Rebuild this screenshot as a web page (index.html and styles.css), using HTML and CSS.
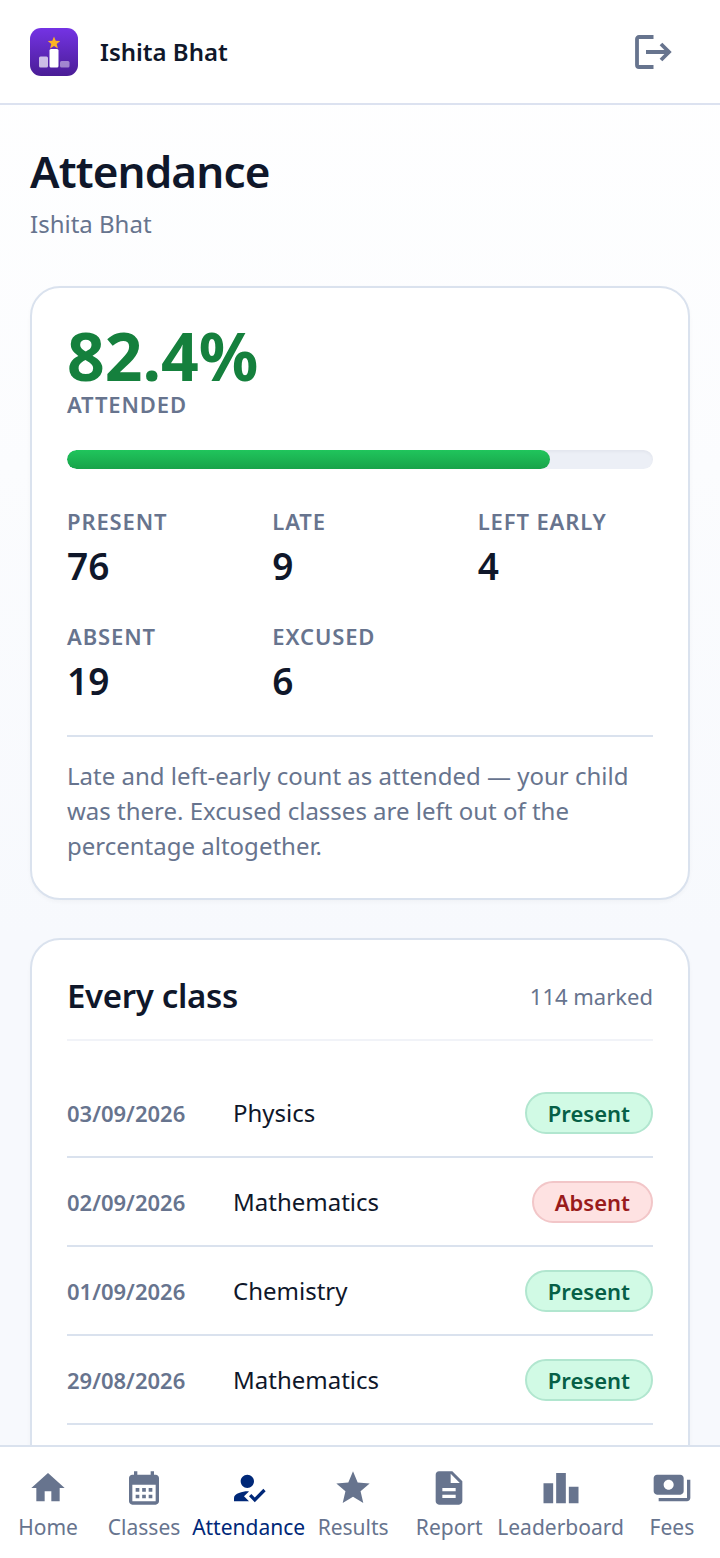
FILE: index.html
```html
<!DOCTYPE html>
<html lang="en">
<head>
    <meta charset="UTF-8">
    <meta name="viewport" content="width=device-width, initial-scale=1.0">
    <title>Attendance</title>
    <link rel="stylesheet" href="styles.css">
</head>
<body>
    <header class="topbar">
        <svg class="logo" viewBox="0 0 48 48" aria-hidden="true">
            <defs>
                <linearGradient id="logoBg" x1="0" y1="0" x2="0" y2="1">
                    <stop offset="0" stop-color="#7433e4"/>
                    <stop offset="1" stop-color="#4a1d96"/>
                </linearGradient>
            </defs>
            <rect width="48" height="48" rx="11" fill="url(#logoBg)"/>
            <rect x="9" y="28.500" width="9" height="11" rx="1.500" fill="#fff" fill-opacity=".7"/>
            <rect x="19.500" y="21" width="9" height="18.500" rx="1.500" fill="#fff"/>
            <rect x="30" y="33" width="9.500" height="6.500" rx="1.500" fill="#fff" fill-opacity=".45"/>
            <path d="M24 8.500l1.700 4.200 4.500.3-3.500 2.900 1.200 4.600L24 18l-3.900 2.500 1.200-4.600-3.500-2.900 4.500-.3z" fill="#fbb324"/>
        </svg>
        <span class="topbar-name">Ishita Bhat</span>
        <button class="logout" type="button" aria-label="Log out">
            <svg viewBox="0 0 40 40" aria-hidden="true">
                <path d="M19.500 5H5a2 2 0 0 0-2 2v26a2 2 0 0 0 2 2h14.500" fill="none" stroke="currentColor" stroke-width="3.800"/>
                <path d="M12 20h23M27 12l8 8-8 8" fill="none" stroke="currentColor" stroke-width="3.800"/>
            </svg>
        </button>
    </header>

    <main class="content">
        <h1>Attendance</h1>
        <p class="subtitle">Ishita Bhat</p>

        <section class="card">
            <div class="rate">82.4%</div>
            <div class="label">ATTENDED</div>
            <div class="progress-bar">
                <div class="progress-fill" style="width: 82.4%"></div>
            </div>
            <dl class="stats">
                <div><dt class="label">PRESENT</dt><dd>76</dd></div>
                <div><dt class="label">LATE</dt><dd>9</dd></div>
                <div><dt class="label">LEFT EARLY</dt><dd>4</dd></div>
                <div><dt class="label">ABSENT</dt><dd>19</dd></div>
                <div><dt class="label">EXCUSED</dt><dd>6</dd></div>
            </dl>
            <p class="note">Late and left-early count as attended — your child was there. Excused classes are left out of the percentage altogether.</p>
        </section>

        <section class="card card-list">
            <div class="card-head">
                <h2>Every class</h2>
                <span class="count">114 marked</span>
            </div>
            <ul class="class-list">
                <li>
                    <time datetime="2026-09-03">03/09/2026</time>
                    <span class="subject">Physics</span>
                    <span class="pill present">Present</span>
                </li>
                <li>
                    <time datetime="2026-09-02">02/09/2026</time>
                    <span class="subject">Mathematics</span>
                    <span class="pill absent">Absent</span>
                </li>
                <li>
                    <time datetime="2026-09-01">01/09/2026</time>
                    <span class="subject">Chemistry</span>
                    <span class="pill present">Present</span>
                </li>
                <li>
                    <time datetime="2026-08-29">29/08/2026</time>
                    <span class="subject">Mathematics</span>
                    <span class="pill present">Present</span>
                </li>
            </ul>
        </section>
    </main>

    <nav class="tabs">
        <a href="#home">
            <svg viewBox="0 0 24 24" aria-hidden="true"><path d="M10 20v-6h4v6h5v-8h3L12 3 2 12h3v8z"/></svg>
            Home
        </a>
        <a href="#classes">
            <svg viewBox="0 0 24 24" aria-hidden="true"><path fill-rule="evenodd" d="M19 4h-1V2h-2v2H8V2H6v2H5c-1.110 0-1.990.9-1.990 2L3 20c0 1.100.89 2 2 2h14c1.100 0 2-.9 2-2V6c0-1.100-.9-2-2-2zm0 16H5V10h14v10zM9.200 14.200H7v-2.200h2.200v2.200zm3.900 0h-2.200v-2.200h2.200v2.200zm3.900 0h-2.200v-2.200H17v2.200zm-7.800 4H7V16h2.200v2.200zm3.900 0h-2.200V16h2.200v2.200zm3.900 0h-2.200V16H17v2.200z"/></svg>
            Classes
        </a>
        <a href="#attendance" class="active" aria-current="page">
            <svg viewBox="0 0 24 24" aria-hidden="true"><path d="M9 17l3-2.940c-.39-.04-.68-.06-1-.06-2.670 0-8 1.340-8 4v2h9l-3-3zm2-5c2.210 0 4-1.790 4-4s-1.790-4-4-4-4 1.790-4 4 1.790 4 4 4zm4.470 8.500L12 17l1.400-1.410 2.070 2.080 5.130-5.170 1.400 1.410z"/></svg>
            Attendance
        </a>
        <a href="#results">
            <svg viewBox="0 0 24 24" aria-hidden="true"><path d="M12 17.270L18.180 21l-1.640-7.030L22 9.240l-7.190-.61L12 2 9.190 8.630 2 9.240l5.460 4.730L5.820 21z"/></svg>
            Results
        </a>
        <a href="#report">
            <svg viewBox="0 0 24 24" aria-hidden="true"><path d="M14 2H6c-1.100 0-1.990.9-1.990 2L4 20c0 1.100.89 2 1.990 2H18c1.100 0 2-.9 2-2V8l-6-6zm2 16H8v-2h8v2zm0-4H8v-2h8v2zm-3-5V3.500L18.500 9H13z"/></svg>
            Report
        </a>
        <a href="#leaderboard">
            <svg viewBox="0 0 24 24" aria-hidden="true"><path d="M1.500 9.200h5.800V21.200H1.500zM9.100 3h5.800v18.200H9.100zM16.700 11.200h5.800v10h-5.800z"/></svg>
            Leaderboard
        </a>
        <a href="#fees">
            <svg viewBox="0 0 24 24" aria-hidden="true"><path d="M19 14V6c0-1.100-.9-2-2-2H3c-1.100 0-2 .9-2 2v8c0 1.100.9 2 2 2h14c1.100 0 2-.9 2-2zm-9-1c-1.660 0-3-1.340-3-3s1.340-3 3-3 3 1.340 3 3-1.340 3-3 3zm13-6v11c0 1.100-.9 2-2 2H4v-2h17V7h2z"/></svg>
            Fees
        </a>
    </nav>
</body>
</html>
```

FILE: styles.css
```css
* {
    box-sizing: border-box;
}

body {
    display: flex;
    flex-direction: column;
    height: 100vh;
    margin: 0;
    font-family: "Noto Sans", sans-serif;
    font-size: 24px;
    color: #0f172a;
    background: linear-gradient(#ffffff, #f7f9fd 60%);
}

h1, h2, p, dl, dd, ul {
    margin: 0;
    padding: 0;
}

.topbar {
    display: flex;
    align-items: center;
    flex-shrink: 0;
    gap: 22px;
    height: 105px;
    padding: 0 30px;
    background: #fff;
    border-bottom: 2px solid #dce2f0;
}

.logo {
    width: 48px;
    height: 48px;
}

.topbar-name {
    font-weight: 600;
}

.logout {
    display: flex;
    margin-left: auto;
    padding: 16px;
    border: none;
    background: none;
    color: #67748e;
    cursor: pointer;
}

.logout svg {
    width: 40px;
    height: 40px;
}

.content {
    flex: 1;
    min-height: 0;
    padding: 38px 30px;
    overflow-y: auto;
    scrollbar-width: none;
}

h1 {
    font-size: 44px;
    font-weight: 600;
    line-height: 56px;
    letter-spacing: -0.02em;
}

.subtitle {
    margin-top: 7px;
    line-height: 36px;
    color: #67748e;
}

.card {
    margin-top: 38px;
    padding: 35px;
    background: #fff;
    border: 2px solid #dae2ee;
    border-radius: 30px;
    box-shadow: 0 2px 4px rgba(15, 23, 42, 0.03);
}

.subtitle + .card {
    margin-top: 44px;
}

.label {
    font-size: 22px;
    font-weight: 600;
    line-height: 34px;
    letter-spacing: 0.04em;
    color: #67748e;
}

.rate {
    font-size: 66px;
    font-weight: 700;
    line-height: 64px;
    color: #15803d;
}

.progress-bar {
    height: 19px;
    margin-top: 29px;
    overflow: hidden;
    background: #eceff6;
    border-radius: 10px;
    box-shadow: inset 0 2px 3px rgba(15, 23, 42, 0.04);
}

.progress-fill {
    height: 100%;
    background: linear-gradient(#20c55c, #18a34a);
    border-radius: 10px;
}

.stats {
    display: grid;
    grid-template-columns: repeat(3, 1fr);
    gap: 26px 30px;
    margin-top: 35px;
}

.stats dd {
    font-size: 37px;
    font-weight: 600;
    line-height: 55px;
}

.note {
    margin-top: 27px;
    padding-top: 21px;
    border-top: 2px solid #dae2ee;
    line-height: 35px;
    color: #67748e;
}

.card-list {
    padding-bottom: 64px;
}

.card-head {
    display: flex;
    align-items: center;
    justify-content: space-between;
    padding-bottom: 22px;
    border-bottom: 2px solid #f1f3f8;
}

h2 {
    font-size: 33px;
    font-weight: 600;
    line-height: 42px;
    letter-spacing: -0.01em;
}

.count {
    font-size: 22px;
    color: #67748e;
}

.class-list {
    margin-top: 28px;
    list-style: none;
}

.class-list li {
    display: flex;
    align-items: center;
    min-height: 89px;
    border-bottom: 2px solid #dae2ee;
}

.class-list time {
    width: 166px;
    font-size: 22px;
    font-weight: 600;
    color: #67748e;
}

.subject {
    flex: 1;
}

.pill {
    padding: 0 21px;
    font-size: 22px;
    font-weight: 600;
    line-height: 38px;
    border: 2px solid;
    border-radius: 21px;
}

.present {
    color: #065f46;
    background: #d1fae5;
    border-color: #b1e6cf;
}

.absent {
    color: #991b1b;
    background: #fee2e2;
    border-color: #f2c6c8;
}

.tabs {
    display: flex;
    flex-shrink: 0;
    padding: 21px 0 16px;
    background: #fff;
    border-top: 2px solid #dae2ee;
}

.tabs a {
    display: flex;
    flex: 1;
    flex-direction: column;
    align-items: center;
    gap: 4px;
    font-size: 21px;
    line-height: 30px;
    text-decoration: none;
    color: #67748e;
}

.tabs svg {
    width: 40px;
    height: 40px;
    fill: currentColor;
}

.tabs .active {
    color: #002878;
}
```
